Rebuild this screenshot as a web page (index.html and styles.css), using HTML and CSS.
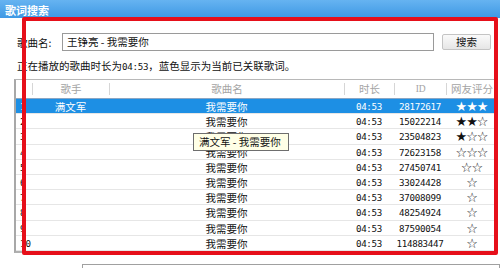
FILE: index.html
```html
<!DOCTYPE html>
<html lang="zh-CN">
<head>
    <meta charset="UTF-8">
    <title>歌词搜索</title>
    <link rel="stylesheet" href="styles.css">
</head>
<body>

<div class="window">
    <div class="titlebar">歌词搜索</div>

    <div class="content">
        <div class="search-row">
            <span class="label">歌曲名:</span>
            <div class="search-input">王铮亮 - 我需要你</div>
            <button class="search-btn">搜索</button>
        </div>

        <div class="info">正在播放的歌曲时长为<span class="num">04:53</span>，蓝色显示为当前已关联歌词。</div>

        <div class="list">
            <div class="row head">
                <span class="sep"></span>
                <span class="cell">歌手</span>
                <span class="cell">歌曲名</span>
                <span class="cell">时长</span>
                <span class="cell num">ID</span>
                <span class="cell">网友评分</span>
            </div>
            <div class="row selected">
                <span class="idx">1</span><span class="cell">满文军</span><span class="cell">我需要你</span>
                <span class="cell num">04:53</span><span class="cell num">28172617</span><span class="cell stars">★★★</span>
            </div>
            <div class="row">
                <span class="idx">2</span><span class="cell"></span><span class="cell">我需要你</span>
                <span class="cell num">04:53</span><span class="cell num">15022214</span><span class="cell stars">★★☆</span>
            </div>
            <div class="row">
                <span class="idx">3</span><span class="cell"></span><span class="cell">我需要你</span>
                <span class="cell num">04:53</span><span class="cell num">23504823</span><span class="cell stars">★☆☆</span>
            </div>
            <div class="row">
                <span class="idx">4</span><span class="cell"></span><span class="cell">我需要你</span>
                <span class="cell num">04:53</span><span class="cell num">72623158</span><span class="cell stars">☆☆☆</span>
            </div>
            <div class="row">
                <span class="idx">5</span><span class="cell"></span><span class="cell">我需要你</span>
                <span class="cell num">04:53</span><span class="cell num">27450741</span><span class="cell stars">☆☆</span>
            </div>
            <div class="row">
                <span class="idx">6</span><span class="cell"></span><span class="cell">我需要你</span>
                <span class="cell num">04:53</span><span class="cell num">33024428</span><span class="cell stars">☆</span>
            </div>
            <div class="row">
                <span class="idx">7</span><span class="cell"></span><span class="cell">我需要你</span>
                <span class="cell num">04:53</span><span class="cell num">37008099</span><span class="cell stars">☆</span>
            </div>
            <div class="row">
                <span class="idx">8</span><span class="cell"></span><span class="cell">我需要你</span>
                <span class="cell num">04:53</span><span class="cell num">48254924</span><span class="cell stars">☆</span>
            </div>
            <div class="row">
                <span class="idx">9</span><span class="cell"></span><span class="cell">我需要你</span>
                <span class="cell num">04:53</span><span class="cell num">87590054</span><span class="cell stars">☆</span>
            </div>
            <div class="row">
                <span class="idx">10</span><span class="cell"></span><span class="cell">我需要你</span>
                <span class="cell num">04:53</span><span class="cell num">114883447</span><span class="cell stars">☆</span>
            </div>
        </div>

        <div class="preview">满文军 - 我需要你</div>
    </div>

    <!-- 提示框 -->
    <div class="tooltip">满文军 - 我需要你</div>
    <!-- 红色标注框 -->
    <div class="mark"></div>
</div>

</body>
</html>
```

FILE: styles.css
```css
body {
    margin: 0;
    background-color: #fff;
    font-family: "Noto Sans CJK SC", sans-serif;
    font-size: 10.5px;
    color: #111;
}

.window {
    position: relative;
    width: 500px;
    height: 268px;
    overflow: hidden;
    background-color: #fff;
}

.titlebar {
    height: 18px;
    line-height: 20px;
    padding-left: 5px;
    background: linear-gradient(#66b3f1, #3e98e4);
    color: #fff;
    font-weight: bold;
    font-size: 11px;
}

.content {
    padding-left: 14px;
}

.search-row {
    display: flex;
    align-items: center;
    margin-top: 15px;
    height: 18px;
}

.label {
    margin-left: 3px;
    width: 45px;
}

.search-input {
    width: 366px;
    height: 16px;
    line-height: 16px;
    border: 1px solid #9a9a9a;
    padding-left: 4px;
    white-space: pre;
}

.search-btn {
    margin-left: 8px;
    width: 49px;
    height: 16px;
    padding: 0;
    border: 1px solid #c4c4c4;
    border-radius: 2px;
    background: linear-gradient(#fafafa, #e6e6e6);
    font-family: "Noto Sans CJK SC", sans-serif;
    font-size: 10.5px;
    line-height: 14px;
    color: #111;
}

.info {
    margin-left: 3px;
    margin-top: 7px;
    height: 15px;
    line-height: 15px;
}

.num {
    font-family: "DejaVu Sans Mono", monospace;
    font-size: 9.2px;
    letter-spacing: -0.3px;
}

.list {
    margin-top: 6px;
    width: 483px;
    border-top: 1px solid #b8b8b8;
    border-left: 2px solid #a8a8a8;
    border-bottom: 2px solid #b0b0b0;
    box-sizing: border-box;
}

.row {
    display: grid;
    grid-template-columns: 16px 77px 235px 50px 52px 1fr;
    height: 15.2px;
    line-height: 15px;
    border-bottom: 1px solid #e6e6e6;
    box-sizing: border-box;
}

.row .cell {
    text-align: center;
    white-space: nowrap;
    overflow: hidden;
}

.row .idx {
    padding-left: 4px;
    font-family: "DejaVu Sans Mono", monospace;
    font-size: 9.2px;
}

.row.head {
    height: 19px;
    line-height: 18px;
    color: #a4a4a4;
    border-bottom: 1px solid #8aa6c4;
}

.row.head .cell {
    border-left: 1px solid #d6d6d6;
    margin: 3px 0;
    line-height: 12px;
    overflow: visible;
}

.row.head .cell.num {
    font-size: 9.5px;
    font-family: "Liberation Serif", serif;
}

.row.selected {
    background-color: #1d8fe4;
    color: #fff;
}

.stars {
    font-family: "DejaVu Sans", sans-serif;
    font-size: 13px;
    line-height: 15px;
    letter-spacing: -1px;
}

.preview {
    margin-top: 11px;
    margin-left: 68px;
    height: 18px;
    line-height: 18px;
    border: 1px solid #a0a0a0;
    padding-left: 10px;
    white-space: pre;
}

.tooltip {
    position: absolute;
    left: 193px;
    top: 133px;
    width: 96px;
    height: 18px;
    box-sizing: border-box;
    border: 1px solid #6e6e6e;
    background-color: #ffffe6;
    line-height: 16px;
    padding-left: 5px;
    white-space: pre;
}

.mark {
    position: absolute;
    left: 22px;
    top: 17px;
    width: 476px;
    height: 238px;
    border: 4px solid #e60f1a;
    border-radius: 2px;
    box-sizing: border-box;
}
```
